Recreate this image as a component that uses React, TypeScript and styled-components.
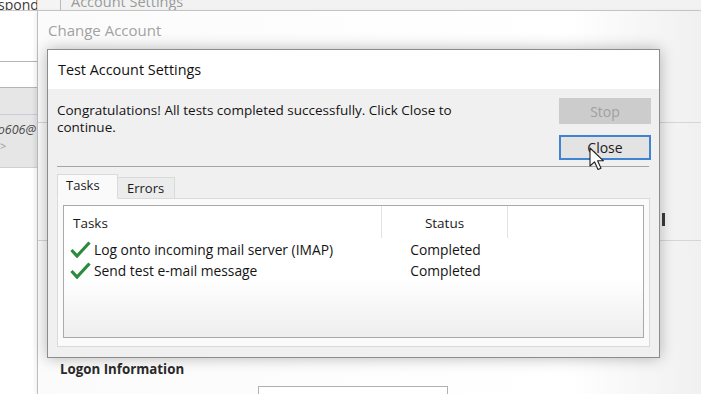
import React, { FC } from 'react'
import styled, { createGlobalStyle } from 'styled-components'

const GlobalStyle = createGlobalStyle`
    html, body {
        margin: 0;
        padding: 0;
        background: #ffffff;
    }
    body {
        font-family: 'Open Sans', 'Noto Sans', sans-serif;
        color: #1e1e1e;
    }
`

const Desktop = styled.div`
    position: relative;
    width: 701px;
    height: 394px;
    overflow: hidden;
    display: flex;
    flex-direction: column;
    background: #ffffff;
    font-size: 12px;
`

/* window behind everything: Account Settings */
const TopStrip = styled.div`
    height: 10px;
    flex: none;
    display: flex;
    border-bottom: 1px solid #c9c9c9;
    overflow: hidden;

    .respond {
        width: 37px;
        background: #ffffff;
        font-size: 14px;
        line-height: 10px;
        color: #3a3a3a;
        text-indent: -2px;
        overflow: hidden;
        white-space: nowrap;
    }

    .gap {
        width: 22px;
        background: #f4f4f4;
        border-left: 1px solid #d5d5d5;
        border-right: 1px solid #b9b9b9;
    }

    .caption {
        flex: 1;
        padding-left: 10px;
        background: #f2f2f2;
        font-size: 14.5px;
        line-height: 4px;
        color: #9a9a9a;
        white-space: nowrap;
    }
`

const Lower = styled.div`
    flex: 1;
    display: flex;
    min-height: 0;
`

const SideList = styled.div`
    width: 37px;
    flex: none;
    display: flex;
    flex-direction: column;
    background: #ffffff;
    overflow: hidden;
`

const SideRow = styled.div<{ h: number; selected?: boolean }>`
    height: ${p => p.h}px;
    flex: none;
    border-bottom: 1px solid ${p => (p.selected ? '#d0d0d0' : '#b5b5b5')};
    background: ${p => (p.selected ? '#e6e6e6' : '#ffffff')};
    font-size: 12.5px;
    color: #4a4a4a;

    .line {
        height: 1px;
        background: #c8ccd8;
        margin-top: 26px;
    }

    .mail {
        display: flex;
        justify-content: flex-end;
        font-style: italic;
        white-space: nowrap;
        margin-top: 7px;
        margin-right: 1px;
        line-height: 16px;
    }

    .arrow {
        color: #9a9a9a;
        font-size: 11px;
        line-height: 16px;
    }
`

const ChangeWindow = styled.div`
    flex: 1;
    display: flex;
    flex-direction: column;
    border-left: 1px solid #bdbdbd;
    box-shadow: -2px 0 4px rgba(0, 0, 0, 0.06);
    background: linear-gradient(90deg, #fbfbfb 0%, #ffffff 80%, #f0f0f0 100%);
`

const WindowTitle = styled.div`
    height: 38px;
    flex: none;
    padding-left: 10px;
    display: flex;
    align-items: center;
    font-size: 15px;
    color: #a2a2a2;
`

const BackSection = styled.div<{ h: number; top: number }>`
    height: ${p => p.h}px;
    margin-top: ${p => p.top}px;
    flex: none;
    border-top: 1px solid #d6d6d6;
    display: flex;
    justify-content: flex-end;
    padding-right: 36px;
    padding-top: 90px;
    box-sizing: border-box;

    .mark {
        width: 3px;
        height: 13px;
        background: #3a3a3a;
    }
`

const BackSectionEnd = styled.div`
    border-top: 1px solid #d6d6d6;
    flex: 1;
    display: flex;
    flex-direction: column;
    padding-left: 22px;
    padding-top: 119px;
`

const GroupHeading = styled.div`
    font-size: 13.3px;
    font-weight: bold;
    color: #2a2a2a;
    line-height: 18px;
`

const FieldRow = styled.div`
    display: flex;
    align-items: flex-start;
    margin-top: 8px;
    font-size: 13px;
    color: #2a2a2a;

    .label {
        width: 198px;
        line-height: 16px;
        padding-top: 5px;
    }

    .input {
        width: 188px;
        height: 20px;
        border: 1px solid #b0b0b0;
        background: #ffffff;
    }
`

/* the modal dialog floating over the Change Account window */
const Dialog = styled.div`
    position: absolute;
    left: 47px;
    top: 49px;
    width: 611px;
    height: 307px;
    border: 1px solid #8c8c8c;
    box-shadow: 0 0 14px rgba(0, 0, 0, 0.28);
    display: flex;
    flex-direction: column;
    background: #f0f0f0;
`

const DialogTitle = styled.div`
    height: 39px;
    flex: none;
    background: #ffffff;
    padding-left: 10px;
    display: flex;
    align-items: center;
    font-size: 14.4px;
    color: #111;
`

const DialogBody = styled.div`
    flex: 1;
    display: flex;
    flex-direction: column;
    padding: 9px 8px 9px 9px;
`

const TopRow = styled.div`
    display: flex;
    justify-content: space-between;
    padding-bottom: 6px;
    border-bottom: 1px solid #a5a5a5;
    margin-right: 2px;
`

const Message = styled.div`
    width: 430px;
    padding-top: 4px;
    font-size: 13.5px;
    line-height: 17px;
    color: #141414;
`

const ButtonColumn = styled.div`
    display: flex;
    flex-direction: column;
    gap: 11px;
    margin-right: -2px;
`

const Button = styled.div<{ disabled?: boolean; focused?: boolean }>`
    width: 92px;
    height: ${p => (p.focused ? 25 : 26)}px;
    box-sizing: border-box;
    display: flex;
    align-items: center;
    justify-content: center;
    font-size: 14px;
    background: ${p => (p.disabled ? '#cccccc' : '#e3e3e3')};
    color: ${p => (p.disabled ? '#a0a0a0' : '#1a1a1a')};
    border: ${p => (p.focused ? '2px solid #3f83d3' : '1px solid #cccccc')};
`

const Tabs = styled.div`
    display: flex;
    align-items: flex-end;
    margin-top: 7px;
    height: 25px;
    position: relative;
    z-index: 1;
`

const Tab = styled.div<{ active?: boolean }>`
    height: ${p => (p.active ? 25 : 22)}px;
    box-sizing: border-box;
    min-width: ${p => (p.active ? 61 : 57)}px;
    display: flex;
    align-items: center;
    padding: 0 9px ${p => (p.active ? 3 : 0)}px ${p => (p.active ? 8 : 9)}px;
    font-size: 13px;
    color: #1a1a1a;
    background: ${p => (p.active ? '#fafafa' : '#ececec')};
    border: 1px solid #dadada;
    border-bottom: ${p => (p.active ? '1px solid #fafafa' : '1px solid #dadada')};
    border-left: ${p => (p.active ? '1px solid #dadada' : 'none')};
`

const TabPanel = styled.div`
    height: 149px;
    margin-top: -1px;
    margin-right: 1px;
    background: #fafafa;
    border: 1px solid #dadada;
    padding: 6px 5px 8px 5px;
    box-sizing: border-box;
    display: flex;
`

const ListView = styled.div`
    flex: 1;
    border: 1px solid #a9a9a9;
    background: linear-gradient(180deg, #ffffff 55%, #eeeeee 100%);
    display: flex;
    flex-direction: column;
`

const HeaderRow = styled.div`
    display: grid;
    grid-template-columns: 318px 126px 1fr;
    height: 32px;
    font-size: 13.5px;
    color: #1a1a1a;
    margin-bottom: 1px;
`

const HeaderCell = styled.div<{ center?: boolean; last?: boolean }>`
    display: flex;
    align-items: center;
    justify-content: ${p => (p.center ? 'center' : 'flex-start')};
    padding-left: ${p => (p.center ? 0 : 9)}px;
    padding-top: 1px;
    border-right: ${p => (p.last ? 'none' : '1px solid #e3e3e3')};
`

const TaskRow = styled.div`
    display: grid;
    grid-template-columns: 318px 126px 1fr;
    height: 21px;
    font-size: 13.8px;
    color: #141414;
`

const TaskName = styled.div`
    display: flex;
    align-items: center;
    gap: 3px;
    padding-left: 6px;
`

const TaskStatus = styled.div`
    display: flex;
    align-items: center;
    justify-content: center;
    padding-left: 1px;
`

const Cursor = styled.svg`
    position: absolute;
    left: 589px;
    top: 147px;
`

const Check: FC = () => (
    <svg width="21" height="17" viewBox="0 0 21 17">
        <path d="M1.5 9 L7 15 L19.5 1.5" fill="none" stroke="#2c8a3c" strokeWidth="3.2" strokeLinejoin="miter" />
    </svg>
)

const tasks = [
    { name: 'Log onto incoming mail server (IMAP)', status: 'Completed' },
    { name: 'Send test e-mail message', status: 'Completed' },
]

const App: FC = () => {
    return (
        <Desktop>
            <GlobalStyle />
            <TopStrip>
                <div className="respond">spond</div>
                <div className="gap" />
                <div className="caption">Account Settings</div>
            </TopStrip>
            <Lower>
                <SideList>
                    <SideRow h={50} />
                    <SideRow h={25} />
                    <SideRow h={79} selected>
                        <div className="line" />
                        <div className="mail"><span>ko606@</span></div>
                        <div className="arrow">&gt;</div>
                    </SideRow>
                </SideList>
                <ChangeWindow>
                    <WindowTitle>Change Account</WindowTitle>
                    <BackSection top={73} h={118}>
                        <div className="mark" />
                    </BackSection>
                    <BackSectionEnd>
                        <GroupHeading>Logon Information</GroupHeading>
                        <FieldRow>
                            <div className="label">User Name:</div>
                            <div className="input" />
                        </FieldRow>
                    </BackSectionEnd>
                </ChangeWindow>
            </Lower>

            <Dialog>
                <DialogTitle>Test Account Settings</DialogTitle>
                <DialogBody>
                    <TopRow>
                        <Message>
                            Congratulations! All tests completed successfully. Click Close to continue.
                        </Message>
                        <ButtonColumn>
                            <Button disabled>Stop</Button>
                            <Button focused>Close</Button>
                        </ButtonColumn>
                    </TopRow>
                    <Tabs>
                        <Tab active>Tasks</Tab>
                        <Tab>Errors</Tab>
                    </Tabs>
                    <TabPanel>
                        <ListView>
                            <HeaderRow>
                                <HeaderCell>Tasks</HeaderCell>
                                <HeaderCell center>Status</HeaderCell>
                                <HeaderCell last />
                            </HeaderRow>
                            {tasks.map(t => (
                                <TaskRow key={t.name}>
                                    <TaskName>
                                        <Check />
                                        {t.name}
                                    </TaskName>
                                    <TaskStatus>{t.status}</TaskStatus>
                                    <div />
                                </TaskRow>
                            ))}
                        </ListView>
                    </TabPanel>
                </DialogBody>
            </Dialog>

            <Cursor width="18" height="26" viewBox="0 0 18 26">
                <path d="M1 1 L1 19 L5.5 14.8 L9 22.5 L12 21.2 L8.6 13.8 L14.5 13.8 Z" fill="#ffffff" stroke="#222" strokeWidth="1.1" strokeLinejoin="round" />
            </Cursor>
        </Desktop>
    )
}

export default App
